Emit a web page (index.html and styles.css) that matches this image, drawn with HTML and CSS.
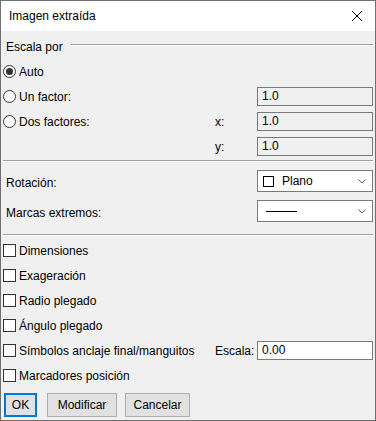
FILE: index.html
```html
<!DOCTYPE html>
<html lang="es">
<head>
    <meta charset="UTF-8">
    <title>Imagen extraída</title>
    <link rel="stylesheet" href="styles.css">
</head>
<body>
    <div class="window">
        <div class="titlebar">
            <span class="title">Imagen extraída</span>
            <svg class="close" width="12" height="12" viewBox="0 0 12 12">
                <path d="M1 1 L11 11 M11 1 L1 11" stroke="#000" stroke-width="1" fill="none"/>
            </svg>
        </div>
        <div class="content">
            <div class="group-head">
                <span class="group-title">Escala por</span>
                <div class="group-line"></div>
            </div>
            <div class="row">
                <label class="opt"><span class="radio checked"></span>Auto</label>
            </div>
            <div class="row">
                <label class="opt"><span class="radio"></span>Un factor:</label>
                <div class="field disabled">1.0</div>
            </div>
            <div class="row">
                <label class="opt"><span class="radio"></span>Dos factores:</label>
                <span class="axis">x:</span>
                <div class="field disabled">1.0</div>
            </div>
            <div class="row">
                <span class="opt"></span>
                <span class="axis">y:</span>
                <div class="field disabled">1.0</div>
            </div>

            <div class="sep sep-1"></div>

            <div class="row tall first-tall">
                <span class="opt plain">Rotación:</span>
                <div class="combo">
                    <span class="mini-box"></span><span class="combo-text">Plano</span>
                    <svg class="chev" width="8" height="5" viewBox="0 0 8 5"><path d="M0.5 0.5 L4 4 L7.5 0.5" stroke="#606060" fill="none"/></svg>
                </div>
            </div>
            <div class="row tall">
                <span class="opt plain">Marcas extremos:</span>
                <div class="combo">
                    <span class="stroke-line"></span>
                    <svg class="chev" width="8" height="5" viewBox="0 0 8 5"><path d="M0.5 0.5 L4 4 L7.5 0.5" stroke="#606060" fill="none"/></svg>
                </div>
            </div>

            <div class="sep sep-2"></div>

            <div class="checks">
                <div class="row"><label class="opt"><span class="check"></span>Dimensiones</label></div>
                <div class="row"><label class="opt"><span class="check"></span>Exageración</label></div>
                <div class="row"><label class="opt"><span class="check"></span>Radio plegado</label></div>
                <div class="row"><label class="opt"><span class="check"></span>Ángulo plegado</label></div>
                <div class="row">
                    <label class="opt"><span class="check"></span>Símbolos anclaje final/manguitos</label>
                    <span class="axis">Escala:</span>
                    <div class="field">0.00</div>
                </div>
                <div class="row"><label class="opt"><span class="check"></span>Marcadores posición</label></div>
            </div>

            <div class="buttons">
                <button class="btn btn-ok">OK</button>
                <button class="btn btn-mod">Modificar</button>
                <button class="btn btn-cancel">Cancelar</button>
            </div>
        </div>
    </div>
</body>
</html>
```

FILE: styles.css
```css
/* dialog look, windows 10 style */
body {
    margin: 0;
    padding: 0;
    font-family: "Liberation Sans", Arial, sans-serif;
    font-size: 12px;
    color: #000;
    background-color: #f0f0f0;
}
.window {
    width: 376px;
    height: 421px;
    box-sizing: border-box;
    border: 1px solid #6f6f6f;
    background-color: #f0f0f0;
    display: flex;
    flex-direction: column;
}
.titlebar {
    height: 30px;
    background-color: #fff;
    display: flex;
    align-items: center;
    padding: 0 8px 0 8px;
}
.title {
    flex: 1;
    font-size: 12px;
}
.close {
    margin-right: 4px;
}
.content {
    padding: 3px 2px 0 2px;
    display: flex;
    flex-direction: column;
}
.group-head {
    height: 25px;
    display: flex;
    align-items: center;
}
.group-title {
    padding-left: 3px;
    margin-right: 8px;
}
.group-line {
    flex: 1;
    border-top: 1px solid #a0a0a0;
    border-bottom: 1px solid #fff;
    margin-bottom: 3px;
}
.row {
    height: 25px;
    display: flex;
    align-items: center;
}
.row.tall {
    height: 30px;
}
.first-tall {
    margin-top: 4px;
}
.opt {
    flex: 1;
    display: flex;
    align-items: center;
}
.opt.plain {
    padding-left: 3px;
    padding-top: 3px;
}
.axis {
    width: 42px;
}
.radio {
    width: 13px;
    height: 13px;
    box-sizing: border-box;
    border: 1px solid #333;
    border-radius: 50%;
    background-color: #fff;
    margin-right: 3px;
    position: relative;
}
.radio.checked::after {
    content: "";
    position: absolute;
    left: 2px;
    top: 2px;
    width: 7px;
    height: 7px;
    border-radius: 50%;
    background-color: #333;
}
.check {
    width: 13px;
    height: 13px;
    box-sizing: border-box;
    border: 1px solid #333;
    background-color: #fff;
    margin-right: 3px;
}
.field {
    width: 116px;
    height: 19px;
    box-sizing: border-box;
    border: 1px solid #7a7a7a;
    background-color: #fff;
    padding-left: 4px;
    line-height: 17px;
}
.field.disabled {
    background-color: #f0f0f0;
}
.sep {
    border-top: 1px solid #a0a0a0;
    border-bottom: 1px solid #fff;
}
.sep-1 {
    margin-top: 1px;
}
.sep-2 {
    margin-top: 8px;
}
.checks {
    margin-top: 2px;
}
.combo {
    width: 116px;
    height: 22px;
    box-sizing: border-box;
    border: 1px solid #7a7a7a;
    background-color: #fff;
    display: flex;
    align-items: center;
    padding-left: 5px;
}
.mini-box {
    width: 11px;
    height: 11px;
    box-sizing: border-box;
    border: 1px solid #000;
    margin-right: 8px;
}
.combo-text {
    flex: 1;
}
.stroke-line {
    width: 31px;
    border-top: 1px solid #000;
    margin-left: 3px;
    margin-right: auto;
    margin-top: 1px;
}
.chev {
    margin-right: 6px;
}
.buttons {
    margin-top: 5px;
    padding-left: 1px;
    display: flex;
}
.btn {
    height: 24px;
    box-sizing: border-box;
    border: 1px solid #adadad;
    background-color: #e1e1e1;
    font-family: "Liberation Sans", Arial, sans-serif;
    font-size: 12px;
    color: #000;
    padding: 0;
    margin-right: 10px;
}
.btn-ok {
    width: 33px;
    border: 2px solid #0078d7;
}
.btn-mod {
    width: 70px;
    margin-right: 8px;
}
.btn-cancel {
    width: 65px;
}
```
